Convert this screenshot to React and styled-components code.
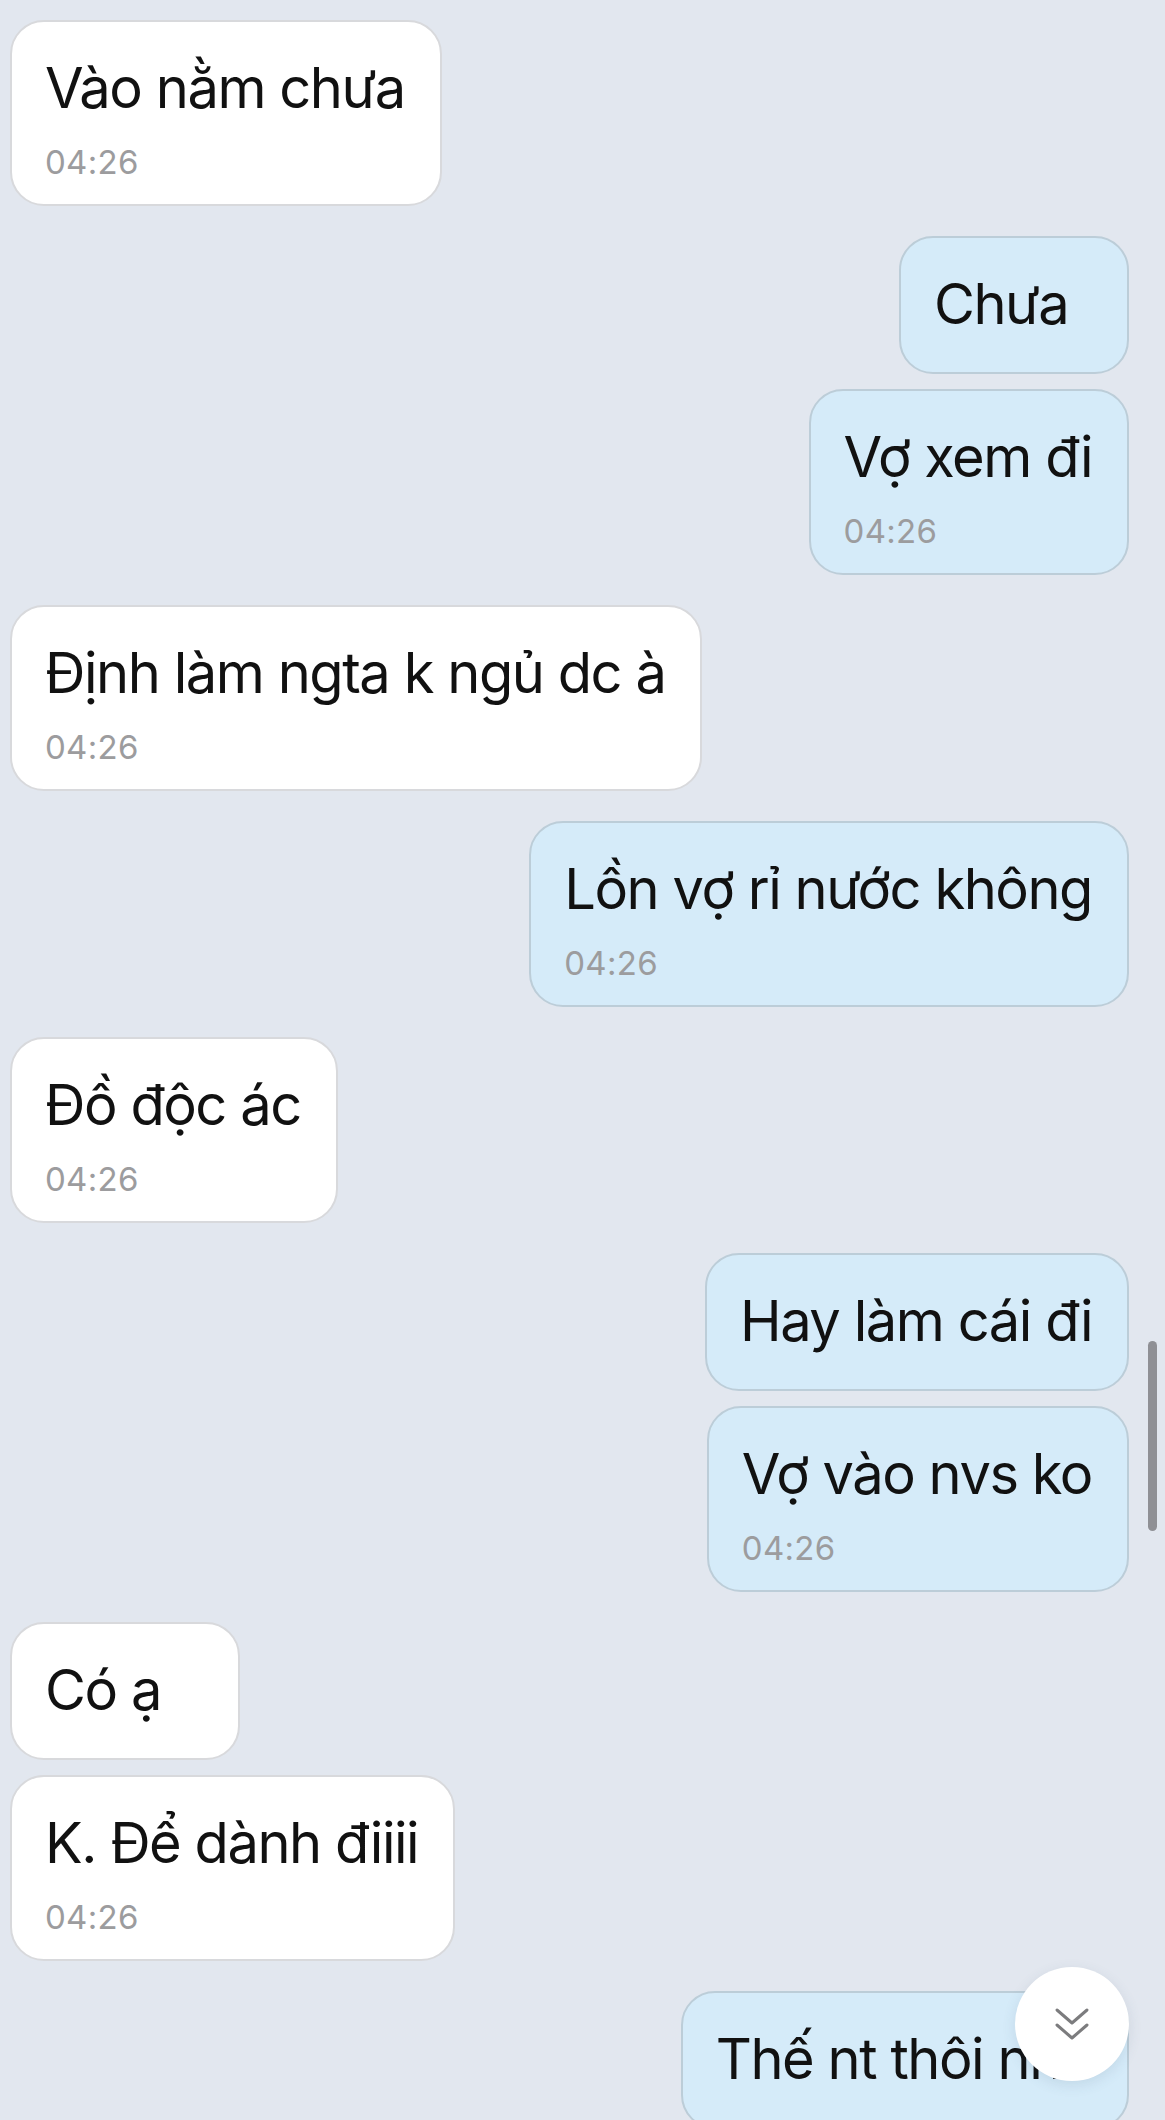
import React from "react";
import styled, { createGlobalStyle } from "styled-components";

const GlobalStyle = createGlobalStyle`
  html, body {
    margin: 0;
    padding: 0;
    background: #e2e7ef;
  }
  body {
    font-family: Inter, "Noto Sans", "DejaVu Sans", sans-serif;
    -webkit-font-smoothing: antialiased;
  }
`;

const Screen = styled.div`
  position: relative;
  width: 1165px;
  height: 2120px;
  overflow: hidden;
  background: #e2e7ef;
`;

const Thread = styled.div`
  display: flex;
  flex-direction: column;
  gap: 30px;
  padding: 20px 36px 0 10px;
`;

const Group = styled.div`
  display: flex;
  flex-direction: column;
  align-items: ${({ mine }) => (mine ? "flex-end" : "flex-start")};
  gap: 15px;
`;

const Bubble = styled.div`
  box-sizing: border-box;
  min-width: 230px;
  padding: 32px 35px ${({ hasTime }) => (hasTime ? "22px" : "34px")} 33px;
  border-radius: 34px;
  border: 2px solid ${({ mine }) => (mine ? "#bccdd8" : "#d8d9dc")};
  background: ${({ mine }) => (mine ? "#d5ebf9" : "#ffffff")};
`;

const Text = styled.div`
  font-size: 56px;
  line-height: 68px;
  letter-spacing: -1.45px;
  color: #111111;
  white-space: nowrap;
`;

const Time = styled.div`
  margin-top: 20px;
  font-size: 33px;
  line-height: 40px;
  color: #9c9c9e;
  letter-spacing: 0.3px;
`;

const ScrollBar = styled.div`
  position: absolute;
  right: 8px;
  top: 1341px;
  width: 9px;
  height: 190px;
  border-radius: 5px;
  background: #8f9095;
`;

const DownButton = styled.button`
  position: absolute;
  right: 36px;
  bottom: 39px;
  width: 114px;
  height: 114px;
  border-radius: 50%;
  border: none;
  padding: 0;
  background: #ffffff;
  box-shadow: 0 4px 14px rgba(60, 80, 110, 0.12);
  display: flex;
  align-items: center;
  justify-content: center;
`;

const messages = [
  { mine: false, items: [{ text: "Vào nằm chưa", time: "04:26" }] },
  {
    mine: true,
    items: [{ text: "Chưa" }, { text: "Vợ xem đi", time: "04:26" }],
  },
  { mine: false, items: [{ text: "Định làm ngta k ngủ dc à", time: "04:26" }] },
  { mine: true, items: [{ text: "Lồn vợ rỉ nước không", time: "04:26" }] },
  { mine: false, items: [{ text: "Đồ độc ác", time: "04:26" }] },
  {
    mine: true,
    items: [{ text: "Hay làm cái đi" }, { text: "Vợ vào nvs ko", time: "04:26" }],
  },
  {
    mine: false,
    items: [{ text: "Có ạ" }, { text: "K. Để dành điiii", time: "04:26" }],
  },
  // last bubble runs off the bottom of the screen
  { mine: true, items: [{ text: "Thế nt thôi nhé" }] },
];

const ChevronsDown = () => (
  <svg width="36" height="36" viewBox="0 0 36 36" fill="none">
    <polyline
      points="3,4 18,17 33,4"
      stroke="#7c7c7e"
      strokeWidth="3"
      strokeLinecap="round"
      strokeLinejoin="round"
    />
    <polyline
      points="3,19 18,32 33,19"
      stroke="#7c7c7e"
      strokeWidth="3"
      strokeLinecap="round"
      strokeLinejoin="round"
    />
  </svg>
);

export default function App() {
  return (
    <Screen>
      <GlobalStyle />
      <Thread>
        {messages.map((group, i) => (
          <Group key={i} mine={group.mine}>
            {group.items.map((m, j) => (
              <Bubble key={j} mine={group.mine} hasTime={!!m.time}>
                <Text>{m.text}</Text>
                {m.time && <Time>{m.time}</Time>}
              </Bubble>
            ))}
          </Group>
        ))}
      </Thread>
      <ScrollBar />
      <DownButton aria-label="Cuộn xuống">
        <ChevronsDown />
      </DownButton>
    </Screen>
  );
}
